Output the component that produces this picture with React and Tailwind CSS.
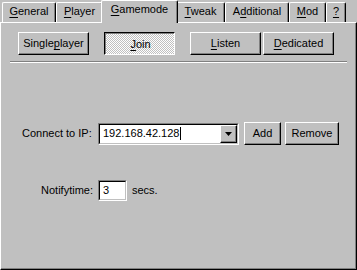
import React from "react";

const raised =
  "border border-t-white border-l-white border-r-black border-b-black shadow-[inset_-1px_-1px_0_#808080]";

function U({ children }) {
  return <span className="underline underline-offset-[2px]">{children}</span>;
}

function Tab({ children, width, selected }) {
  if (selected) {
    return (
      <div
        className={`relative z-10 -mx-[2px] mb-[-1px] h-[23px] ${width} flex items-start justify-center pt-[3px] bg-[#c0c0c0] border-l border-t border-r border-t-white border-l-white border-r-black rounded-t-[2px] shadow-[inset_-1px_0_0_#808080]`}
      >
        {children}
      </div>
    );
  }
  return (
    <div
      className={`h-[20px] ${width} flex items-start justify-center pt-[3px] border-l border-t border-r border-t-white border-l-white border-r-black rounded-t-[2px] shadow-[inset_-1px_0_0_#808080]`}
    >
      {children}
    </div>
  );
}

function Button({ children, className = "" }) {
  return (
    <div className={`h-[23px] flex items-center justify-center bg-[#c0c0c0] ${raised} ${className}`}>
      {children}
    </div>
  );
}

export default function App() {
  return (
    <div
      className="w-[357px] h-[270px] bg-[#c0c0c0] text-black text-[11px] leading-none flex flex-col"
      style={{ fontFamily: '"Liberation Sans", Arial, sans-serif' }}
    >
      <div className="h-[22px] flex items-end pl-[2px]">
        <Tab width="w-[54px]">
          <span>
            <U>G</U>eneral
          </span>
        </Tab>
        <Tab width="w-[47px]">
          <span>
            <U>P</U>layer
          </span>
        </Tab>
        <Tab width="w-[77px]" selected>
          <span>
            <U>G</U>amemode
          </span>
        </Tab>
        <Tab width="w-[49px]">
          <span>
            <U>T</U>weak
          </span>
        </Tab>
        <Tab width="w-[64px]">
          <span>
            A<U>d</U>ditional
          </span>
        </Tab>
        <Tab width="w-[37px]">
          <span>
            <U>M</U>od
          </span>
        </Tab>
        <Tab width="w-[20px]">
          <U>?</U>
        </Tab>
      </div>

      <div className="flex-1 flex flex-col border border-t-white border-l-white border-r-black border-b-black shadow-[inset_-1px_-1px_0_#808080]">
        <div className="flex pl-[17px] mt-[9px]">
          <Button className="w-[71px]">
            <span>
              Single<U>p</U>layer
            </span>
          </Button>
          <div className="ml-[15px] w-[71px] h-[23px] flex items-center justify-center pt-[2px] pl-[2px] border border-t-black border-l-black border-r-white border-b-white shadow-[inset_1px_1px_0_#808080] bg-[conic-gradient(#ffffff_25%,#c0c0c0_0_50%,#ffffff_0_75%,#c0c0c0_0)] bg-[length:2px_2px]">
            <span>
              <U>J</U>oin
            </span>
          </div>
          <Button className="ml-[15px] w-[71px]">
            <span>
              <U>L</U>isten
            </span>
          </Button>
          <Button className="ml-[2px] w-[71px]">
            <span>
              <U>D</U>edicated
            </span>
          </Button>
        </div>

        <div className="ml-[9px] w-[337px] mt-[6px] h-[2px] border-t border-t-[#808080] border-b border-b-white" />

        <div className="flex items-center mt-[59px]">
          <span className="ml-[21px] w-[76px]">Connect to IP:</span>
          <div className="w-[141px] h-[22px] flex border border-t-[#808080] border-l-[#808080] border-r-white border-b-white">
            <div className="flex-1 flex border border-t-black border-l-black border-r-[#c0c0c0] border-b-[#c0c0c0] bg-white">
              <div className="flex-1 flex items-center pl-[3px]">
                192.168.42.128
                <span className="ml-[1px] w-px h-[13px] bg-black" />
              </div>
              <div className={`w-[17px] flex items-center justify-center bg-[#c0c0c0] ${raised}`}>
                <svg width="7" height="4" viewBox="0 0 7 4">
                  <path d="M0 0h7L3.5 4z" fill="#000" />
                </svg>
              </div>
            </div>
          </div>
          <Button className="ml-[5px] w-[37px] h-[21px]">Add</Button>
          <Button className="ml-[4px] w-[54px] h-[21px]">Remove</Button>
        </div>

        <div className="flex items-center mt-[35px]">
          <span className="w-[97px] text-right pr-[5px]">Notifytime:</span>
          <div className="w-[29px] h-[21px] flex border border-t-[#808080] border-l-[#808080] border-r-white border-b-white">
            <div className="flex-1 flex items-center pl-[3px] border border-t-black border-l-black border-r-[#c0c0c0] border-b-[#c0c0c0] bg-white">
              3
            </div>
          </div>
          <span className="ml-[5px]">secs.</span>
        </div>
      </div>
    </div>
  );
}
